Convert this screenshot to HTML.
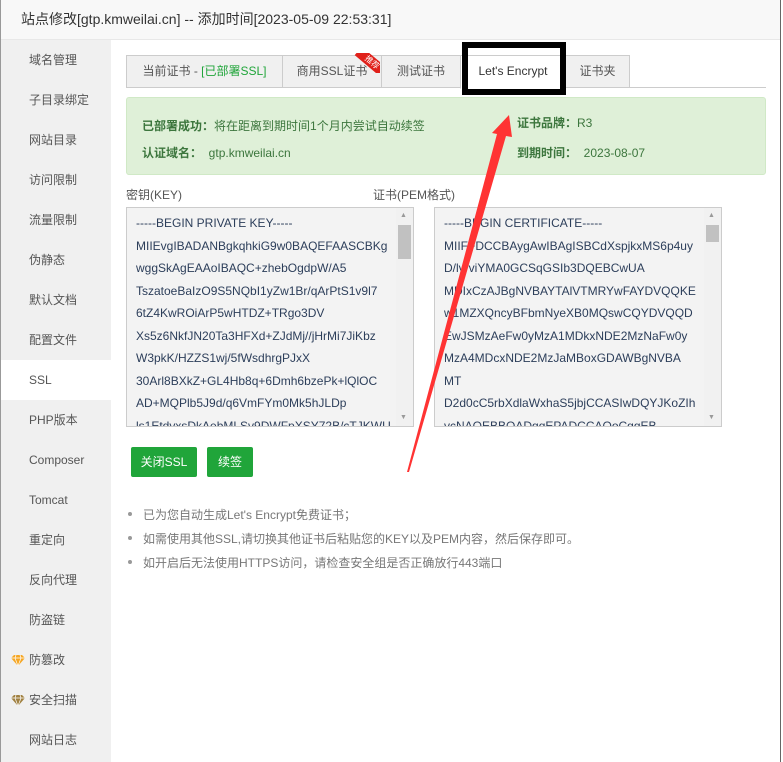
<!DOCTYPE html>
<html><head><meta charset="utf-8"><style>
*{margin:0;padding:0;box-sizing:border-box}
body{width:783px;height:762px;overflow:hidden;background:#fff;font-family:"Liberation Sans","Noto Sans CJK SC",sans-serif;font-size:12px;color:#555;position:relative}
.a{position:absolute}
.title{left:0;top:0;width:783px;height:40px;background:#f8f8f8;border-bottom:1px solid #e8e8e8;font-size:14px;color:#333;line-height:38px;padding-left:21px}
.side{left:1px;top:40px;width:110px;height:722px;background:#f0f0f0}
.side div{position:absolute;left:0;width:110px;height:40px;line-height:41px;padding-left:28px;font-size:12px;color:#555}
.side .on{background:#fff}
.tab{top:55px;height:33px;border:1px solid #ccc;border-right:none;background:#f0f0f0;line-height:31px;text-align:center;color:#555;font-size:12px}
.ta{top:207px;height:220px;border:1px solid #ccc;background:#f3f3f3;color:#2c3e5a;font-size:12px;line-height:22.5px;padding:4px 0 0 9px;overflow:hidden}
.sb{position:absolute;right:0;top:0;width:17px;height:100%;background:#f1f1f1}
.up,.dn{position:absolute;left:4px;font-size:7px;color:#999;line-height:8px}
.up{top:4px}.dn{bottom:4px}
.btn{top:447px;height:30px;background:#20a53a;color:#fff;border-radius:2px;line-height:30px;text-align:center;font-size:12px}
.li{left:128px;font-size:12px;color:#777}
.li:before{content:"";position:absolute;left:0;top:6px;width:4px;height:4px;border-radius:50%;background:#999}
.li span{margin-left:15px}
</style></head><body>
<div class="a" style="left:0;top:0;width:1px;height:762px;background:#999;z-index:5"></div>
<div class="a" style="left:780px;top:0;width:3px;height:762px;background:#fff;border-left:1px solid #666;z-index:5"></div>
<div class="a title">站点修改[gtp.kmweilai.cn] -- 添加时间[2023-05-09 22:53:31]</div>
<div class="a side">
<div style="top:0">域名管理</div><div style="top:40px">子目录绑定</div><div style="top:80px">网站目录</div><div style="top:120px">访问限制</div><div style="top:160px">流量限制</div><div style="top:200px">伪静态</div><div style="top:240px">默认文档</div><div style="top:280px">配置文件</div><div class="on" style="top:320px">SSL</div><div style="top:360px">PHP版本</div><div style="top:400px">Composer</div><div style="top:440px">Tomcat</div><div style="top:480px">重定向</div><div style="top:520px">反向代理</div><div style="top:560px">防盗链</div>
<div style="top:600px"><svg style="position:absolute;left:10px;top:15px" width="14" height="11"><polygon points="3,0 11,0 14,3 7,11 0,3" fill="#f5a623"/><path d="M0,3H14M5,0L4,3L7,11L10,3L9,0" stroke="#fff" stroke-width="0.7" fill="none"/></svg>防篡改</div>
<div style="top:640px"><svg style="position:absolute;left:10px;top:15px" width="14" height="11"><polygon points="3,0 11,0 14,3 7,11 0,3" fill="#a08040"/><path d="M0,3H14M5,0L4,3L7,11L10,3L9,0" stroke="#fff" stroke-width="0.7" fill="none"/></svg>安全扫描</div>
<div style="top:680px">网站日志</div>
</div>
<div class="a" style="left:126px;top:87px;width:640px;height:1px;background:#ccc"></div>
<div class="a tab" style="left:126px;width:156px">当前证书 - <span style="color:#20a53a">[已部署SSL]</span></div>
<div class="a tab" style="left:282px;width:99px">商用SSL证书</div>
<div class="a" style="left:352px;top:53px;width:28px;height:20px;overflow:hidden"><div style="position:absolute;left:2px;top:4px;width:36px;height:11px;background:#e0201a;transform:rotate(40deg);color:#fff;font-size:8px;line-height:11px;text-align:center">推荐</div></div>
<div class="a tab" style="left:381px;width:79px">测试证书</div>
<div class="a tab" style="left:460px;width:105px;background:#fff;border-bottom:1px solid #fff;height:34px;color:#333">Let's Encrypt</div>
<div class="a tab" style="left:565px;width:65px;border-right:1px solid #ccc">证书夹</div>
<div class="a" style="left:462px;top:42px;width:104px;height:53px;border:6px solid #000"></div>
<div class="a" style="left:126px;top:97px;width:640px;height:78px;background:#dff0d8;border:1px solid #d0e9c6;border-radius:3px;color:#3c763d;font-size:12px">
<div class="a" style="left:15px;top:19px"><b>已部署成功：</b>将在距离到期时间1个月内尝试自动续签</div>
<div class="a" style="left:15px;top:46px"><b>认证域名：</b>&nbsp; gtp.kmweilai.cn</div>
<div class="a" style="left:390px;top:16px"><b>证书品牌：</b>R3</div>
<div class="a" style="left:390px;top:46px"><b>到期时间：</b>&nbsp; 2023-08-07</div>
</div>
<div class="a" style="left:126px;top:186px;color:#555">密钥(KEY)</div>
<div class="a" style="left:373px;top:186px;color:#555">证书(PEM格式)</div>
<div class="a ta" style="left:126px;width:288px">-----BEGIN PRIVATE KEY-----<br>MIIEvgIBADANBgkqhkiG9w0BAQEFAASCBKg<br>wggSkAgEAAoIBAQC+zhebOgdpW/A5<br>TszatoeBaIzO9S5NQbI1yZw1Br/qArPtS1v9l7<br>6tZ4KwROiArP5wHTDZ+TRgo3DV<br>Xs5z6NkfJN20Ta3HFXd+ZJdMj//jHrMi7JiKbz<br>W3pkK/HZZS1wj/5fWsdhrgPJxX<br>30Arl8BXkZ+GL4Hb8q+6Dmh6bzePk+lQlOC<br>AD+MQPlb5J9d/q6VmFYm0Mk5hJLDp<br>ls1EtdvxsDkAebMLSv9DWFpXSY72B/cTJKWU<div class="sb"><span class="up">▲</span><div style="position:absolute;left:2px;top:17px;width:13px;height:34px;background:#c1c1c1"></div><span class="dn">▼</span></div></div>
<div class="a ta" style="left:434px;width:288px">-----BEGIN CERTIFICATE-----<br>MIIFFDCCBAygAwIBAgISBCdXspjkxMS6p4uy<br>D/lvrviYMA0GCSqGSIb3DQEBCwUA<br>MDIxCzAJBgNVBAYTAlVTMRYwFAYDVQQKE<br>w1MZXQncyBFbmNyeXB0MQswCQYDVQQD<br>EwJSMzAeFw0yMzA1MDkxNDE2MzNaFw0y<br>MzA4MDcxNDE2MzJaMBoxGDAWBgNVBA<br>MT<br>D2d0cC5rbXdlaWxhaS5jbjCCASIwDQYJKoZIh<br>vcNAQEBBQADggEPADCCAQoCggEB<div class="sb"><span class="up">▲</span><div style="position:absolute;left:2px;top:17px;width:13px;height:17px;background:#c1c1c1"></div><span class="dn">▼</span></div></div>
<div class="a btn" style="left:131px;width:66px">关闭SSL</div>
<div class="a btn" style="left:207px;width:46px">续签</div>
<div class="a li" style="top:506px"><span>已为您自动生成Let's Encrypt免费证书；</span></div>
<div class="a li" style="top:530px"><span>如需使用其他SSL,请切换其他证书后粘贴您的KEY以及PEM内容，然后保存即可。</span></div>
<div class="a li" style="top:554px"><span>如开启后无法使用HTTPS访问，请检查安全组是否正确放行443端口</span></div>
<svg class="a" style="left:0;top:0;z-index:6" width="783" height="762"><polygon points="407,472 497,134 492,133 509,115 512,137 506,136 409,472" fill="#ff3333"/></svg>
</body></html>
